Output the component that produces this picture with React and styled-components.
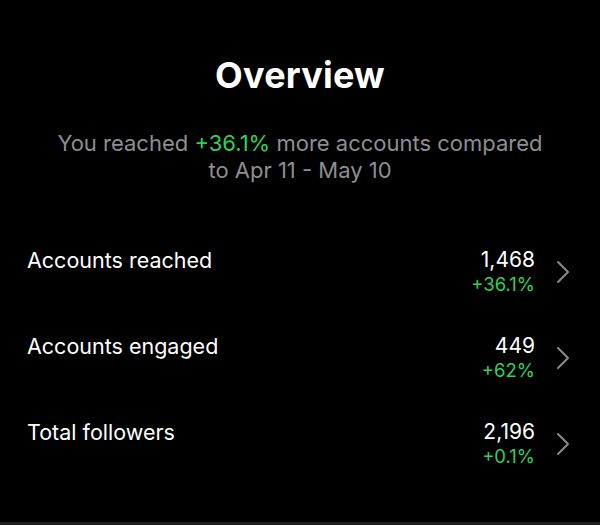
import React from "react";
import styled, { createGlobalStyle } from "styled-components";

const GlobalStyle = createGlobalStyle`
  html, body {
    margin: 0;
    padding: 0;
    background: #000;
  }
  body {
    font-family: Inter, "Liberation Sans", Arial, sans-serif;
    -webkit-font-smoothing: antialiased;
  }
`;

const Screen = styled.div`
  width: 600px;
  height: 525px;
  background: #000;
  display: flex;
  flex-direction: column;
  box-sizing: border-box;
  border-bottom: 3px solid #1f1f1f;
  overflow: hidden;
`;

const Title = styled.h1`
  margin: 53px 0 0;
  text-align: center;
  color: #fff;
  font-size: 36px;
  line-height: 44px;
  font-weight: 700;
  letter-spacing: 0.2px;
`;

const Summary = styled.p`
  margin: 33px 0 0;
  text-align: center;
  color: #8e8e93;
  font-size: 22px;
  line-height: 27px;
  font-weight: 400;
`;

const Green = styled.span`
  color: #30d158;
`;

const List = styled.div`
  display: flex;
  flex-direction: column;
  margin-top: 63px;
  padding: 0 30px 0 27px;
`;

const Row = styled.div`
  display: flex;
  justify-content: space-between;
  align-items: flex-start;
  height: 86px;
`;

const Label = styled.span`
  color: #fff;
  font-size: 21.5px;
  line-height: 26px;
`;

const Right = styled.div`
  display: flex;
  align-items: center;
  gap: 21px;
`;

const Stats = styled.div`
  display: flex;
  flex-direction: column;
  align-items: flex-end;
`;

const Value = styled.span`
  color: #fff;
  font-size: 21px;
  line-height: 26px;
`;

const Change = styled.span`
  color: #30d158;
  font-size: 18.5px;
  line-height: 23px;
`;

const Chevron = () => (
  <svg width="14" height="24" viewBox="0 0 14 24" fill="none">
    <path
      d="M2 2 L12 12 L2 22"
      stroke="#8a8a8e"
      strokeWidth="2"
      strokeLinecap="round"
      strokeLinejoin="round"
    />
  </svg>
);

const metrics = [
  { label: "Accounts reached", value: "1,468", change: "+36.1%" },
  { label: "Accounts engaged", value: "449", change: "+62%" },
  { label: "Total followers", value: "2,196", change: "+0.1%" },
];

const App = () => {
  return (
    <>
      <GlobalStyle />
      <Screen>
        <Title>Overview</Title>
        <Summary>
          You reached <Green>+36.1%</Green> more accounts compared
          <br />
          to Apr 11 - May 10
        </Summary>
        <List>
          {metrics.map((m) => (
            <Row key={m.label}>
              <Label>{m.label}</Label>
              <Right>
                <Stats>
                  <Value>{m.value}</Value>
                  <Change>{m.change}</Change>
                </Stats>
                <Chevron />
              </Right>
            </Row>
          ))}
        </List>
      </Screen>
    </>
  );
};

export default App;
